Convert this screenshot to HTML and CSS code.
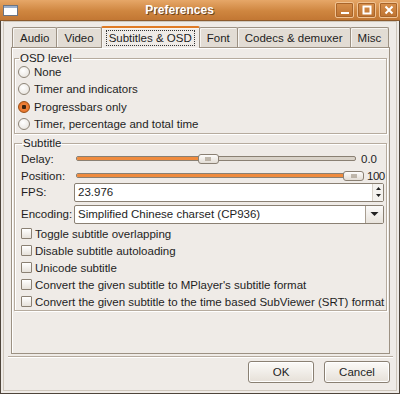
FILE: index.html
```html
<!DOCTYPE html>
<html lang="en">

<head>
    <meta charset="UTF-8">
    <title>Preferences</title>
    <link rel="stylesheet" href="styles.css">
</head>

<body>
    <div class="window">
        <header class="titlebar">
            <svg class="win-icon" width="15" height="11" viewBox="0 0 15 11">
                <rect x="0.5" y="0.5" width="14" height="10" fill="#fff" stroke="#6b7482" />
                <rect x="1" y="1" width="13" height="2" fill="#9cb0cc" />
            </svg>
            <span class="title">Preferences</span>
            <div class="wm-buttons">
                <span class="wm-btn">
                    <svg width="10" height="10" viewBox="0 0 10 10"><rect x="1" y="7" width="8" height="2" fill="#fff" /></svg>
                </span>
                <span class="wm-btn">
                    <svg width="10" height="10" viewBox="0 0 10 10"><rect x="1.5" y="1.5" width="7" height="7" fill="none" stroke="#fff" stroke-width="2" /></svg>
                </span>
                <span class="wm-btn">
                    <svg width="10" height="10" viewBox="0 0 10 10"><path d="M1.5 1.5 L8.5 8.5 M8.5 1.5 L1.5 8.5" stroke="#fff" stroke-width="2" /></svg>
                </span>
            </div>
        </header>

        <div class="client">
            <div class="notebook">
                <div class="tabs">
                    <span class="tab">Audio</span>
                    <span class="tab">Video</span>
                    <span class="tab active"><span class="focus">Subtitles &amp; OSD</span></span>
                    <span class="tab">Font</span>
                    <span class="tab">Codecs &amp; demuxer</span>
                    <span class="tab">Misc</span>
                </div>

                <div class="panel">
                    <fieldset class="frame osd">
                        <legend>OSD level</legend>
                        <label class="row"><span class="radio"></span>None</label>
                        <label class="row"><span class="radio"></span>Timer and indicators</label>
                        <label class="row"><span class="radio checked"></span>Progressbars only</label>
                        <label class="row"><span class="radio"></span>Timer, percentage and total time</label>
                    </fieldset>

                    <fieldset class="frame subs">
                        <legend>Subtitle</legend>
                        <div class="field slider-row">
                            <span class="field-label">Delay:</span>
                            <div class="scale">
                                <div class="trough">
                                    <div class="fill" style="width: 47%"></div>
                                </div>
                                <span class="knob" style="left: 47%"></span>
                            </div>
                            <span class="value">0.0</span>
                        </div>
                        <div class="field slider-row">
                            <span class="field-label">Position:</span>
                            <div class="scale wide">
                                <div class="trough">
                                    <div class="fill" style="width: 100%"></div>
                                </div>
                                <span class="knob end" style="left: 100%"></span>
                            </div>
                            <span class="value tight">100</span>
                        </div>
                        <div class="field entry-row fps">
                            <span class="field-label">FPS:</span>
                            <div class="entry">
                                <span class="entry-text">23.976</span>
                                <span class="spin">
                                    <svg width="7" height="14" viewBox="0 0 7 14">
                                        <path d="M3.5 2 L6 5 L1 5 Z M1 9 L6 9 L3.5 12 Z" fill="#222" />
                                    </svg>
                                </span>
                            </div>
                        </div>
                        <div class="field entry-row">
                            <span class="field-label">Encoding:</span>
                            <div class="entry combo">
                                <span class="entry-text">Simplified Chinese charset (CP936)</span>
                                <span class="drop">
                                    <svg width="9" height="6" viewBox="0 0 9 6"><path d="M0.5 1 L8.5 1 L4.5 5 Z" fill="#222" /></svg>
                                </span>
                            </div>
                        </div>
                        <div class="checks">
                            <label class="row check-row"><span class="check"></span>Toggle subtitle overlapping</label>
                            <label class="row check-row"><span class="check"></span>Disable subtitle autoloading</label>
                            <label class="row check-row"><span class="check"></span>Unicode subtitle</label>
                            <label class="row check-row"><span class="check"></span>Convert the given subtitle to MPlayer's subtitle format</label>
                            <label class="row check-row"><span class="check"></span>Convert the given subtitle to the time based SubViewer (SRT) format</label>
                        </div>
                    </fieldset>
                </div>
            </div>

            <div class="separator"></div>

            <div class="actions">
                <button class="btn">OK</button>
                <button class="btn">Cancel</button>
            </div>
        </div>
    </div>
</body>

</html>
```

FILE: styles.css
```css
* {
    box-sizing: border-box;
}

body {
    margin: 0;
    background: #fff;
    font-family: "Liberation Sans", Arial, sans-serif;
    font-size: 11.5px;
    color: #1e1e1e;
}

.window {
    width: 400px;
    height: 394px;
    background: #efebe7;
    border: 1px solid #4f453b;
    border-top: none;
    display: flex;
    flex-direction: column;
}

.titlebar {
    height: 21px;
    display: flex;
    align-items: center;
    padding: 0 2px 0 3px;
    background: linear-gradient(#e6a768, #cf8640 55%, #c27733);
    border-bottom: 1px solid #8c5a2c;
    margin: 0 -1px;
}

.title {
    flex: 1;
    text-align: center;
    color: #fff;
    font-weight: bold;
    font-size: 12px;
    text-shadow: 1px 1px 0 #6d4420;
    padding-left: 6px;
}

.wm-buttons {
    display: flex;
    gap: 3px;
}

.wm-btn {
    width: 19px;
    height: 16px;
    border: 1px solid #f1c393;
    border-radius: 2px;
    background: linear-gradient(#d8904c, #bd7230);
    display: flex;
    justify-content: center;
    align-items: center;
    box-shadow: inset 0 0 0 1px #a9652a;
}

.client {
    flex: 1;
    display: flex;
    flex-direction: column;
    border: 1px solid #cfc7bc;
    margin: 0 2px 2px;
    padding: 3px 6px 7px 7px;
}

.notebook {
    flex: 1;
    display: flex;
    flex-direction: column;
}

.tabs {
    display: flex;
    align-items: flex-end;
    padding-left: 1px;
    height: 22px;
}

.tab {
    height: 20px;
    padding: 0 7px;
    display: flex;
    align-items: center;
    background: #e2dcd4;
    border: 1px solid #9c9183;
    border-bottom: none;
    border-radius: 2px 2px 0 0;
    margin-right: -1px;
    box-shadow: inset 1px 1px 0 #f7f5f2;
}

.tab.active {
    height: 22px;
    background: #efebe7;
    border-top: 2px solid #df7a25;
    margin-bottom: -1px;
    position: relative;
    z-index: 1;
    padding: 0 4px;
}

.focus {
    border: 1px dotted #333;
    padding: 1px 2px;
}

.panel {
    flex: 1;
    border: 1px solid #9c9183;
    box-shadow: inset 1px 1px 0 #fff;
    padding: 5px 2px 3px 2px;
    display: flex;
    flex-direction: column;
}

.frame {
    margin: 0;
    border: 1px solid #b6ab9e;
    box-shadow: 1px 1px 0 #fff, inset 1px 1px 0 #fff;
    padding: 0 0 0 3px;
}

.frame legend {
    padding: 0 1px;
    margin-left: 1px;
    color: #222;
    line-height: 10px;
}

.osd {
    height: 81px;
}

.subs {
    margin-top: 4px;
    height: 173px;
    padding: 2px 0 0 6px;
}

.row {
    display: flex;
    align-items: center;
    height: 17.5px;
    gap: 4px;
    white-space: nowrap;
}

.radio {
    width: 12px;
    height: 12px;
    border-radius: 50%;
    border: 1px solid #8d8477;
    background: radial-gradient(circle at 40% 35%, #fff, #e4dfd8);
}

.radio.checked {
    border-color: #9a4d12;
    background: radial-gradient(circle, #3b2410 0 2px, #f0823a 2.5px, #e06a20);
}

.field {
    display: flex;
    align-items: center;
}

.field-label {
    width: 54px;
    flex: none;
}

.slider-row {
    height: 17px;
}

.scale {
    position: relative;
    width: 280px;
    height: 12px;
    display: flex;
    align-items: center;
    margin-left: 1px;
}

.scale.wide {
    width: 288px;
}

.trough {
    width: 100%;
    height: 5px;
    background: #d9d2c8;
    border: 1px solid #8a8073;
    border-radius: 2px;
}

.fill {
    height: 100%;
    background: #f08b3e;
    border-radius: 1px;
}

.knob {
    position: absolute;
    top: 1px;
    width: 21px;
    height: 10px;
    margin-left: -10px;
    border: 1px solid #8a8073;
    border-radius: 3px;
    background: linear-gradient(#fdfcfb, #e3ddd5);
    display: flex;
}

.knob::after {
    content: "";
    margin: auto;
    width: 6px;
    height: 4px;
    background: radial-gradient(circle, #a39888 0.6px, transparent 0.9px) 0 0 / 2px 2px;
}

.knob.end {
    margin-left: -21px;
}

.value {
    margin-left: 5px;
}

.value.tight {
    margin-left: 3px;
    letter-spacing: -0.5px;
}

.entry-row {
    height: 22px;
}

.entry-row.fps {
    margin-top: -3px;
}

.entry {
    width: 310px;
    height: 19px;
    margin-left: -1px;
    display: flex;
    align-items: center;
    background: #fff;
    border: 1px solid #8a8073;
    border-radius: 2px;
}

.entry-text {
    flex: 1;
    padding-left: 3px;
}

.spin {
    width: 11px;
    height: 100%;
    display: flex;
    align-items: center;
    justify-content: center;
    border-left: 1px solid #d6d0c7;
    background: #f4f2ef;
}

.drop {
    width: 18px;
    height: 100%;
    display: flex;
    align-items: center;
    justify-content: center;
    border-left: 1px solid #a89e91;
    background: linear-gradient(#fbfaf9, #e8e3dc);
}

.check-row {
    height: 17px;
    gap: 3px;
}

.check {
    width: 11px;
    height: 11px;
    border: 1px solid #8a8073;
    border-radius: 1px;
    background: linear-gradient(#fff, #e6e1da);
}

.separator {
    height: 2px;
    border-top: 1px solid #b6ab9e;
    border-bottom: 1px solid #fff;
    margin: 2px -3px 3px -3px;
}

.actions {
    display: flex;
    justify-content: flex-end;
    gap: 10px;
}

.btn {
    width: 66px;
    height: 22px;
    font-family: inherit;
    font-size: 11.5px;
    color: #1e1e1e;
    border: 1px solid #8a8073;
    border-radius: 3px;
    background: linear-gradient(#fbfaf8, #e6e0d8);
    box-shadow: inset 0 0 0 1px #fff;
}
```
